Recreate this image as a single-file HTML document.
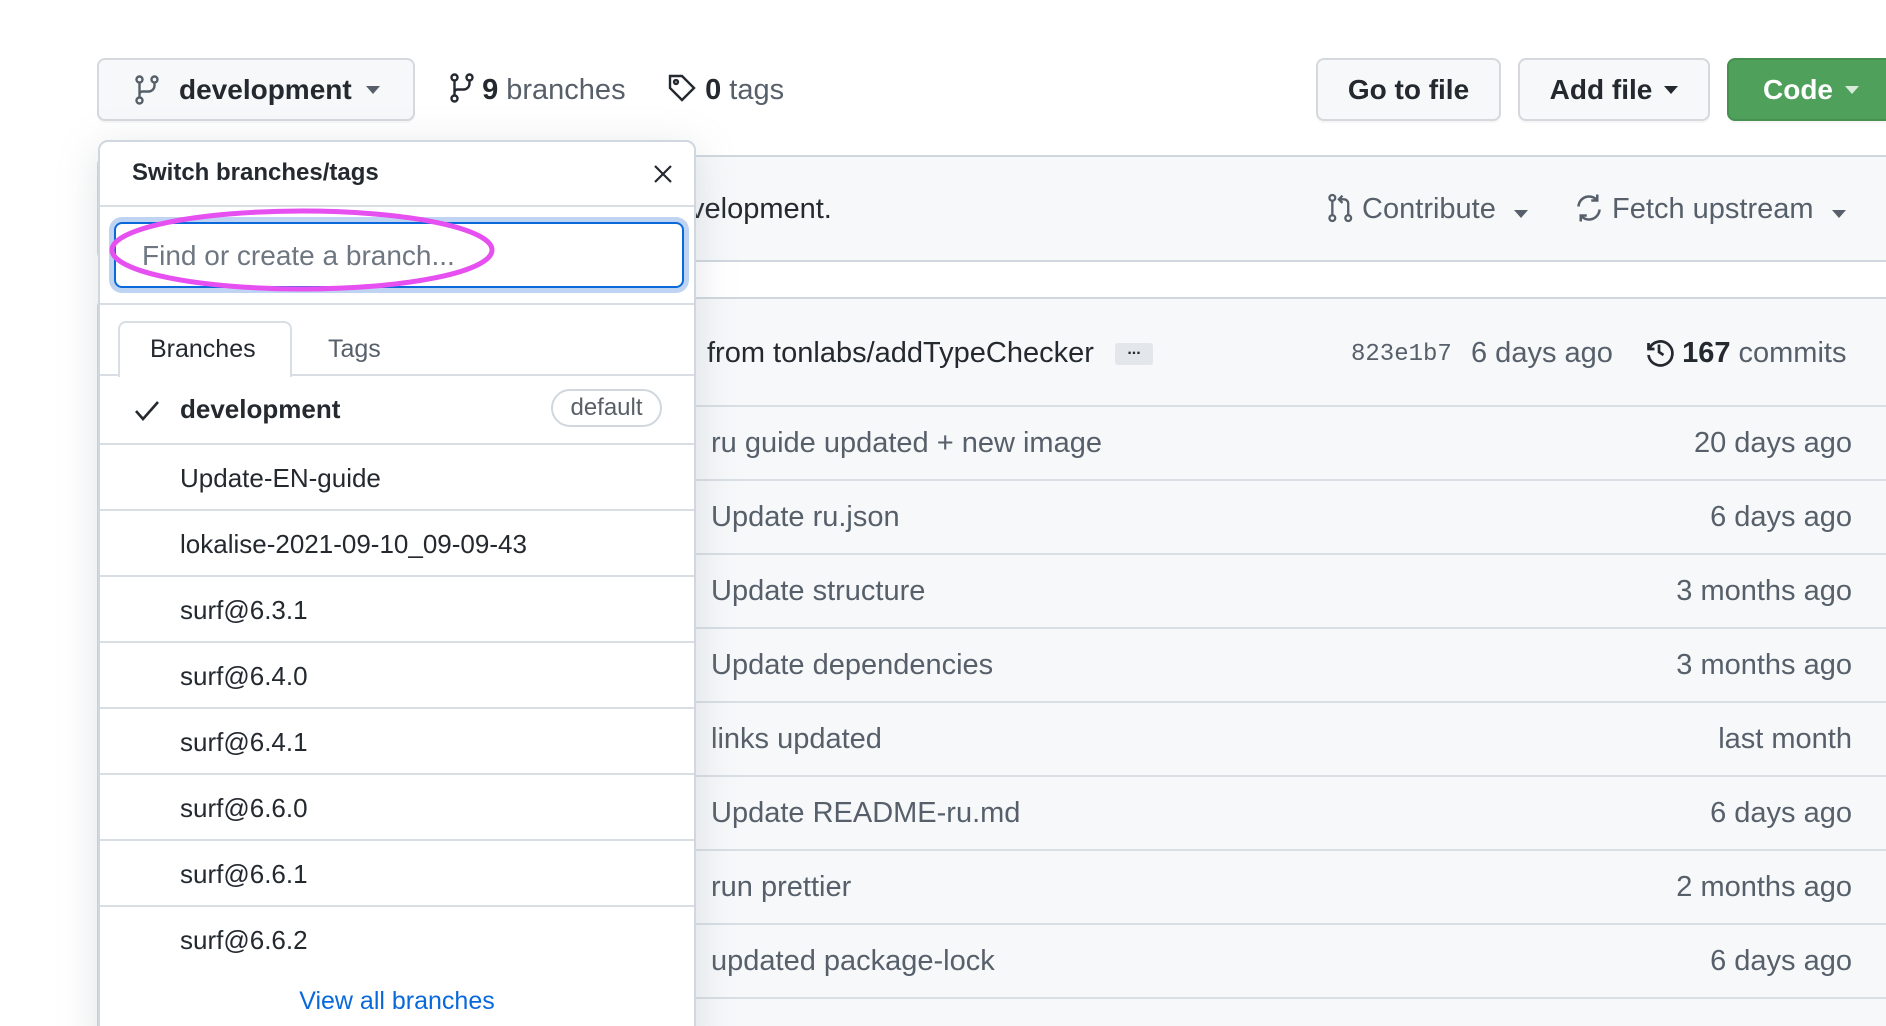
<!DOCTYPE html>
<html style="width:1886px;height:1026px;overflow:hidden"><head><meta charset="utf-8"><style>
*{box-sizing:border-box;margin:0;padding:0}
body{width:1886px;height:1026px;overflow:hidden;background:#fff;font-family:"Liberation Sans",sans-serif;color:#24292f;position:relative}
.a{position:absolute;white-space:nowrap}
.btn{position:absolute;background:#f6f8fa;border:2px solid #d5d9de;border-radius:8px;font-size:28px;font-weight:bold;display:flex;align-items:center;justify-content:center;box-shadow:0 2px 0 rgba(27,31,36,0.04)}
.car{display:inline-block;width:0;height:0;border-left:7px solid transparent;border-right:7px solid transparent;border-top:8px solid currentColor;margin-left:12px}
.g{color:#57606a}
.row{position:absolute;left:0;right:0;height:74px;border-top:2px solid #d8dee4;background:#f6f8fa;font-size:29px;color:#57606a}
.row span{position:absolute;top:20px}
.row .r{right:63px}
.row .l{left:612px}
.br{position:absolute;left:0;right:0;height:66px;border-top:2px solid #d8dee4;font-size:26px}
.br span{position:absolute;left:80px;top:18px}
</style></head><body>

<div class="btn" style="left:97px;top:58px;width:318px;height:63px;justify-content:flex-start;padding-left:36px">
<svg width="24" height="30" viewBox="0 0 16 20" fill="none" stroke="#57606a" stroke-width="1.6"><circle cx="3" cy="3" r="2"/><circle cx="13" cy="3" r="2"/><circle cx="3" cy="17" r="2"/><path d="M3 5v10M13 5v2a4 4 0 0 1-4 4H5a2 2 0 0 0-2 2"/></svg>
<span style="margin-left:20px">development</span><span class="car" style="color:#57606a;margin-left:14px"></span></div>

<div class="a" style="left:450px;top:73px;font-size:29px"><svg width="24" height="30" viewBox="0 0 16 20" fill="none" stroke="#24292f" stroke-width="1.6" style="vertical-align:-4px"><circle cx="3" cy="3" r="2"/><circle cx="13" cy="3" r="2"/><circle cx="3" cy="17" r="2"/><path d="M3 5v10M13 5v2a4 4 0 0 1-4 4H5a2 2 0 0 0-2 2"/></svg> <b>9</b> <span class="g">branches</span></div>
<div class="a" style="left:667px;top:73px;font-size:29px"><svg width="30" height="30" viewBox="0 0 20 20" fill="none" stroke="#24292f" stroke-width="1.6" style="vertical-align:-4px"><path d="M2 2h8l8 8-8 8-8-8z"/><circle cx="6" cy="6" r="1.3"/></svg> <b>0</b> <span class="g">tags</span></div>

<div class="btn" style="left:1316px;top:58px;width:185px;height:63px">Go to file</div>
<div class="btn" style="left:1518px;top:58px;width:192px;height:63px">Add file<span class="car" style="color:#24292f"></span></div>
<div class="btn" style="left:1727px;top:58px;width:190px;height:63px;background:#4fa05a;border-color:#46914f;color:#fff;justify-content:flex-start;padding-left:34px">Code<span class="car" style="color:#d6ecd9"></span></div>

<!-- box1 -->
<div class="a" style="left:97px;top:155px;width:1820px;height:107px;background:#f6f8fa;border:2px solid #d0d7de;border-radius:10px"></div>
<div class="a" style="left:690px;top:193px;font-size:29px">velopment.</div>
<div class="a g" style="left:1328px;top:193px;font-size:29px"><svg width="26" height="30" viewBox="0 0 18 20" fill="none" stroke="#57606a" stroke-width="1.6" style="vertical-align:-5px"><circle cx="3" cy="3" r="2"/><circle cx="3" cy="17" r="2"/><circle cx="14" cy="17" r="2"/><path d="M3 5v10M14 15V7a3 3 0 0 0-3-3H8M10 1.5 7.5 4 10 6.5"/></svg> Contribute<span class="car" style="color:#57606a;margin-left:18px"></span></div>
<div class="a g" style="left:1574px;top:193px;font-size:29px"><svg width="30" height="30" viewBox="0 0 20 20" fill="none" stroke="#57606a" stroke-width="1.7" style="vertical-align:-5px"><path d="M3 9a7 7 0 0 1 12.5-4M17 11a7 7 0 0 1-12.5 4M15.5 1v4h-4M4.5 19v-4h4"/></svg> Fetch upstream<span class="car" style="color:#57606a;margin-left:18px"></span></div>

<!-- box2 -->
<div class="a" style="left:97px;top:297px;width:1820px;height:760px;border:2px solid #d0d7de;border-radius:10px;overflow:hidden;background:#f6f8fa">
<div class="a" style="left:608px;top:38px;font-size:29px">from tonlabs/addTypeChecker</div>
<div class="a" style="left:1016px;top:44px;width:38px;height:22px;background:#e3e7eb;border-radius:3px;font-size:16px;font-weight:bold;text-align:center;line-height:14px">...</div>
<div class="a g" style="left:1252px;top:42px;font-size:24px;font-family:'Liberation Mono',monospace">823e1b7</div>
<div class="a g" style="left:1372px;top:38px;font-size:29px">6 days ago</div>
<div class="a" style="left:1545px;top:38px;font-size:29px"><svg width="30" height="30" viewBox="0 0 20 20" fill="none" stroke="#24292f" stroke-width="1.8" style="vertical-align:-5px"><path d="M3 4v4h4"/><path d="M3.5 8A8 8 0 1 1 3 12"/><path d="M10 5v5l3 2"/></svg> <b>167</b> <span class="g">commits</span></div>
<div class="row" style="top:106px"><span class="l">ru guide updated + new image</span><span class="r">20 days ago</span></div>
<div class="row" style="top:180px"><span class="l">Update ru.json</span><span class="r">6 days ago</span></div>
<div class="row" style="top:254px"><span class="l">Update structure</span><span class="r">3 months ago</span></div>
<div class="row" style="top:328px"><span class="l">Update dependencies</span><span class="r">3 months ago</span></div>
<div class="row" style="top:402px"><span class="l">links updated</span><span class="r">last month</span></div>
<div class="row" style="top:476px"><span class="l">Update README-ru.md</span><span class="r">6 days ago</span></div>
<div class="row" style="top:550px"><span class="l">run prettier</span><span class="r">2 months ago</span></div>
<div class="row" style="top:624px"><span class="l">updated package-lock</span><span class="r">6 days ago</span></div>
<div class="row" style="top:698px"></div>
</div>

<!-- dropdown -->
<div class="a" style="left:98px;top:140px;width:598px;height:920px;background:#fff;border:2px solid #d0d7de;border-radius:10px;box-shadow:0 8px 40px rgba(140,149,159,0.25);overflow:hidden">
<div class="a" style="left:32px;top:17px;font-size:24px;font-weight:bold">Switch branches/tags</div>
<svg class="a" style="left:553px;top:22px" width="20" height="20" viewBox="0 0 20 20" stroke="#24292f" stroke-width="2.2"><path d="M2 2l16 16M18 2 2 18"/></svg>
<div class="a" style="left:0;right:0;top:63px;border-top:2px solid #d8dee4"></div>
<div class="a" style="left:14px;top:80px;width:570px;height:66px;border:2px solid #0969da;border-radius:8px;box-shadow:0 0 0 5px #bfd4f2"></div>
<div class="a" style="left:42px;top:98px;font-size:28px;color:#6e7781">Find or create a branch...</div>
<div class="a" style="left:0;right:0;top:161px;border-top:2px solid #d8dee4"></div>
<div class="a" style="left:0;right:0;top:232px;border-top:2px solid #d8dee4"></div>
<div class="a" style="left:18px;top:179px;width:174px;height:56px;background:#fff;border:2px solid #d8dee4;border-bottom:none;border-radius:8px 8px 0 0"></div>
<div class="a" style="left:50px;top:193px;font-size:25px">Branches</div>
<div class="a g" style="left:228px;top:193px;font-size:25px">Tags</div>
<div class="br" style="top:234px;border-top:none"><svg class="a" style="left:34px;top:24px" width="26" height="22" viewBox="0 0 26 22" fill="none" stroke="#24292f" stroke-width="2.6"><path d="M2 11l7 8L24 2"/></svg><span style="font-weight:bold">development</span>
<div class="a" style="left:451px;top:13px;width:111px;height:38px;border:2px solid #d0d7de;border-radius:19px;font-size:24px;color:#57606a;text-align:center;line-height:34px">default</div></div>
<div class="br" style="top:301px"><span>Update-EN-guide</span></div>
<div class="br" style="top:367px"><span>lokalise-2021-09-10_09-09-43</span></div>
<div class="br" style="top:433px"><span>surf@6.3.1</span></div>
<div class="br" style="top:499px"><span>surf@6.4.0</span></div>
<div class="br" style="top:565px"><span>surf@6.4.1</span></div>
<div class="br" style="top:631px"><span>surf@6.6.0</span></div>
<div class="br" style="top:697px"><span>surf@6.6.1</span></div>
<div class="br" style="top:763px"><span>surf@6.6.2</span></div>
<div class="a" style="left:0;right:0;top:845px;text-align:center;font-size:25px;color:#0969da">View all branches</div>
</div>

<svg class="a" style="left:0;top:0" width="700" height="400"><ellipse cx="302" cy="250" rx="190" ry="39" fill="none" stroke="#e64ff0" stroke-width="5"/></svg>
</body></html>
